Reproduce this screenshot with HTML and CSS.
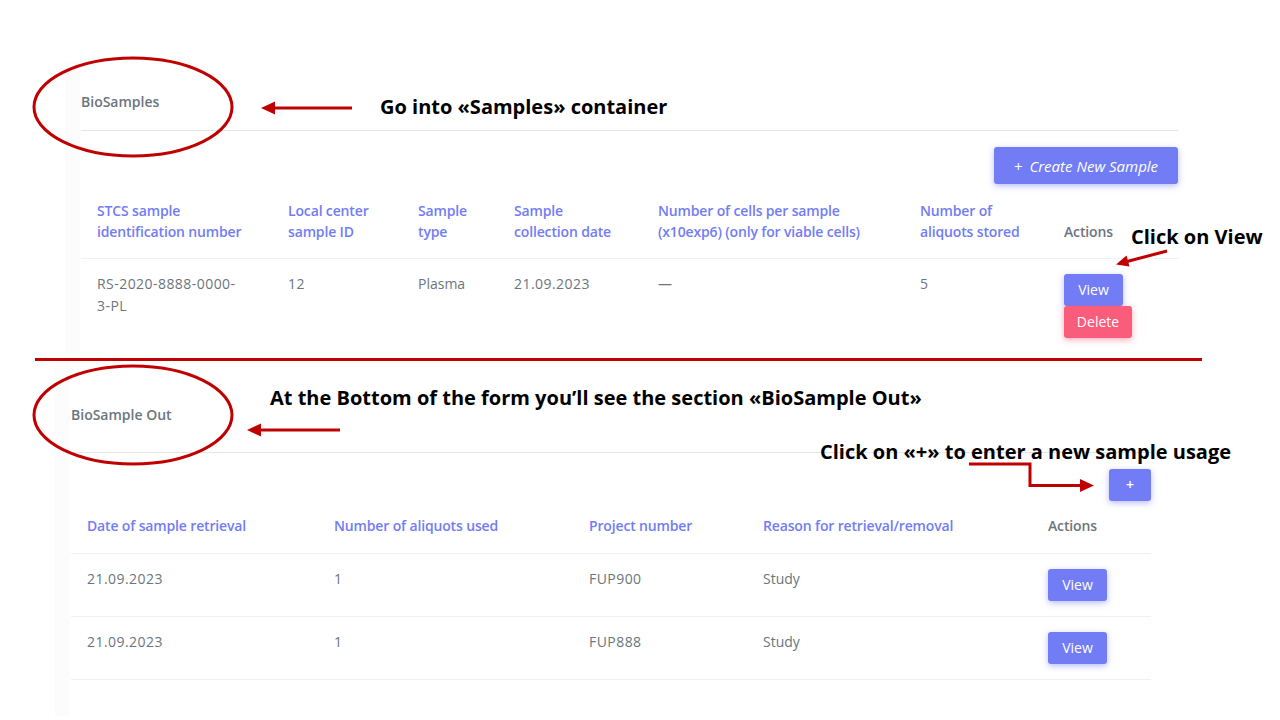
FILE: index.html
```html
<!DOCTYPE html>
<html lang="en">
<head>
<meta charset="utf-8">
<title>BioSamples</title>
<link rel="stylesheet" href="styles.css">
</head>
<body>
<div class="slide">
  <section class="panel panel-top">
    <div class="card-header"><h4 class="card-title">BioSamples</h4></div>
    <div class="toolbar toolbar-top">
      <button class="btn btn-primary btn-create"><span class="plus">+</span> Create New Sample</button>
    </div>
    <table class="grid grid-top">
      <colgroup>
        <col style="width:191px"><col style="width:130px"><col style="width:96px"><col style="width:144px"><col style="width:262px"><col style="width:144px"><col style="width:131px">
      </colgroup>
      <thead>
        <tr>
          <th>STCS sample<br>identification number</th>
          <th>Local center<br>sample ID</th>
          <th>Sample<br>type</th>
          <th>Sample<br>collection date</th>
          <th>Number of cells per sample<br>(x10exp6) (only for viable cells)</th>
          <th>Number of<br>aliquots stored</th>
          <th class="th-actions">Actions</th>
        </tr>
      </thead>
      <tbody>
        <tr>
          <td class="num">RS-2020-8888-0000-<br>3-PL</td>
          <td class="num">12</td>
          <td>Plasma</td>
          <td class="num">21.09.2023</td>
          <td>—</td>
          <td>5</td>
          <td class="td-actions">
            <button class="btn btn-primary btn-view">View</button>
            <button class="btn btn-danger btn-delete">Delete</button>
          </td>
        </tr>
      </tbody>
    </table>
  </section>

  <div class="red-rule"></div>

  <section class="panel panel-bottom">
    <div class="card-header card-header-out"><h4 class="card-title">BioSample Out</h4></div>
    <div class="toolbar toolbar-bottom">
      <button class="btn btn-primary btn-plus">+</button>
    </div>
    <table class="grid grid-bottom">
      <colgroup>
        <col style="width:247px"><col style="width:255px"><col style="width:174px"><col style="width:285px"><col style="width:119px">
      </colgroup>
      <thead>
        <tr>
          <th>Date of sample retrieval</th>
          <th>Number of aliquots used</th>
          <th>Project number</th>
          <th>Reason for retrieval/removal</th>
          <th class="th-actions">Actions</th>
        </tr>
      </thead>
      <tbody>
        <tr>
          <td class="num">21.09.2023</td>
          <td>1</td>
          <td class="num">FUP900</td>
          <td>Study</td>
          <td><button class="btn btn-primary btn-view">View</button></td>
        </tr>
        <tr>
          <td class="num">21.09.2023</td>
          <td>1</td>
          <td class="num">FUP888</td>
          <td>Study</td>
          <td><button class="btn btn-primary btn-view">View</button></td>
        </tr>
      </tbody>
    </table>
  </section>

  <svg class="marks" width="1280" height="720" viewBox="0 0 1280 720" aria-hidden="true">
    <g fill="none" stroke="#c00000" stroke-width="3">
      <ellipse cx="133" cy="107" rx="99" ry="49"/>
      <ellipse cx="133" cy="415" rx="99" ry="49"/>
      <line x1="352" y1="108" x2="272" y2="108"/>
      <line x1="340" y1="430" x2="258" y2="430"/>
      <line x1="1167" y1="251" x2="1127" y2="261.5"/>
      <polyline points="969,464 1030,464 1030,485.5 1083,485.5"/>
    </g>
    <g fill="#c00000">
      <polygon points="261,108 275,101.5 275,114.5"/>
      <polygon points="247,430 261,423.5 261,436.5"/>
      <polygon points="1116,264.5 1129.5,266.5 1126.5,255.5"/>
      <polygon points="1094,485.5 1080,479 1080,492"/>
    </g>
  </svg>

  <p class="note note-1">Go into «Samples» container</p>
  <p class="note note-2">Click on View</p>
  <p class="note note-3">At the Bottom of the form you’ll see the section «BioSample Out»</p>
  <p class="note note-4">Click on «+» to enter a new sample usage</p>
</div>
</body>
</html>
```

FILE: styles.css
```css
* { box-sizing: border-box; }

html, body {
  margin: 0;
  padding: 0;
  background: #ffffff;
}

body {
  font-family: "Open Sans", "Noto Sans", sans-serif;
  font-size: 14px;
  color: #6c757d;
}

.slide {
  position: relative;
  width: 1280px;
  height: 720px;
  overflow: hidden;
  background: #ffffff;
  padding-top: 62px;
}

/* ---------- screenshot panels ---------- */
.panel {
  background: linear-gradient(90deg, #fcfcfd 0, #fcfcfd 15px, #ffffff 15px);
}

.panel-top {
  margin-left: 65px;
  width: 1130px;
  padding: 30px 17px 0 16px;
  height: 292px;
}

.panel-bottom {
  margin-left: 55px;
  width: 1110px;
  padding: 44px 14px 0 16px;
  height: 355px;
}

.card-header {
  padding-bottom: 18px;
  border-bottom: 1px solid #e3e5e8;
}

.card-header-out {
  padding-bottom: 27px;
}

.card-title {
  margin: 0;
  font-size: 14px;
  line-height: 20px;
  font-weight: 600;
  color: #6c757d;
}

.toolbar {
  display: flex;
  justify-content: flex-end;
}

.toolbar-top { padding-top: 16px; }
.toolbar-bottom { padding-top: 16px; }

/* ---------- buttons ---------- */
.btn {
  display: block;
  border: 0;
  border-radius: 3px;
  font-family: inherit;
  font-size: 14px;
  line-height: 20px;
  color: #ffffff;
  padding: 6px 14px;
  height: 32px;
  cursor: pointer;
}

.btn-primary {
  background: #727cf5;
  box-shadow: 0 2px 6px 0 rgba(114, 124, 245, 0.5);
}

.btn-danger {
  background: #fa5c7c;
  box-shadow: 0 2px 6px 0 rgba(250, 92, 124, 0.5);
}

.btn-create {
  width: 184px;
  height: 37px;
  font-size: 15px;
  font-style: italic;
  padding: 8px 0;
  text-align: center;
}

.btn-create .plus {
  font-style: normal;
  margin-right: 3px;
}

.btn-view { width: 59px; padding: 6px 0; text-align: center; }
.btn-delete { width: 68px; padding: 6px 0; text-align: center; }
.btn-plus { width: 42px; padding: 6px 0; text-align: center; font-weight: 600; }

/* ---------- tables ---------- */
.grid {
  border-collapse: collapse;
  table-layout: fixed;
  width: 100%;
}

.grid th,
.grid td {
  text-align: left;
  vertical-align: bottom;
  padding: 16px 12px 16px 16px;
}

.grid th {
  color: #727cf5;
  font-weight: 600;
  line-height: 21px;
  letter-spacing: -0.15px;
  border-bottom: 1px solid #eef2f7;
}

.grid th.th-actions {
  color: #6c757d;
}

.grid td {
  vertical-align: top;
  line-height: 22px;
  border-bottom: 1px solid #eef2f7;
  padding-top: 15px;
}

.grid td.num {
  letter-spacing: 0.45px;
}

.grid-top td { border-bottom: 0; padding-bottom: 16px; }
.grid-top td:not(.td-actions) { padding-top: 14px; }

.grid-bottom th {
  line-height: 20px;
  padding-top: 15px;
  padding-bottom: 17px;
}

.grid-bottom td {
  padding-top: 15px;
  padding-bottom: 15px;
  line-height: 20px;
}

/* ---------- annotations ---------- */
.red-rule {
  margin: 4px 0 0 35px;
  width: 1167px;
  height: 3px;
  background: #c00000;
}

.marks {
  position: absolute;
  left: 0;
  top: 0;
  pointer-events: none;
}

.note {
  position: absolute;
  margin: 0;
  white-space: nowrap;
  font-family: "Open Sans", "Noto Sans", sans-serif;
  font-weight: 700;
  font-size: 20px;
  line-height: 26px;
  letter-spacing: 0;
  color: #000000;
}

.note-1 { left: 380px; top: 94px; }
.note-2 { left: 1131px; top: 224px; }
.note-3 { left: 270px; top: 385px; }
.note-4 { left: 820px; top: 439px; }
```
